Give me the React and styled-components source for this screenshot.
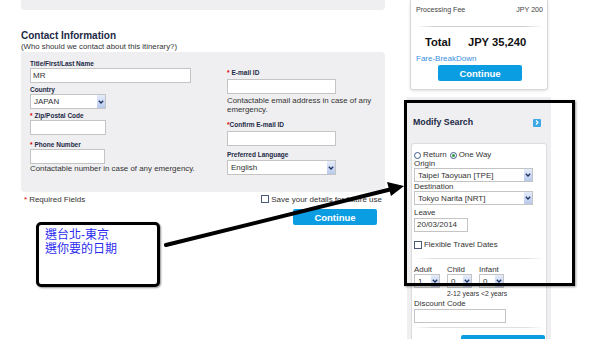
import React from 'react';
import styled, { createGlobalStyle } from 'styled-components';

const Global = createGlobalStyle`
  * { box-sizing: border-box; }
  body {
    margin: 0;
    background: #fff;
    font-family: "Liberation Sans", Arial, sans-serif;
    color: #333;
  }
`;

const Page = styled.div`
  position: relative;
  display: flex;
  align-items: flex-start;
  width: 600px;
  height: 339px;
  overflow: hidden;
`;

const Main = styled.main`
  width: 364px;
  margin-left: 21px;
  display: flex;
  flex-direction: column;
`;

const TopStub = styled.div`
  height: 10px;
  background: #efeff1;
  border-radius: 0 0 4px 4px;
`;

const Heading = styled.h2`
  margin: 19px 0 0;
  font-size: 10px;
  line-height: 13px;
  font-weight: bold;
  color: #1c2946;
`;

const Sub = styled.div`
  font-size: 7.8px;
  line-height: 10px;
  color: #333;
`;

const FormPanel = styled.section`
  height: 140px;
  background: #efeff1;
  border-radius: 0 4px 4px 4px;
  padding: 8px 0 0 9px;
  display: grid;
  grid-template-columns: 197px 1fr;
`;

const Col = styled.div`
  display: flex;
  flex-direction: column;
  align-items: flex-start;
`;

const Label = styled.div`
  margin-top: ${p => p.$mt || 0}px;
  font-size: 6.5px;
  line-height: 8px;
  font-weight: bold;
  color: #1c2946;
  white-space: nowrap;
`;

const Star = styled.span`
  color: #d40000;
  margin-right: ${p => (p.$tight ? 0 : 2)}px;
`;

const Input = styled.div`
  margin-top: ${p => p.$mt || 0}px;
  width: ${p => p.$w}px;
  height: ${p => p.$h || 15}px;
  background: #fff;
  border: 1px solid #c4c4c4;
  font-size: 8px;
  line-height: ${p => (p.$h || 15) - 2}px;
  padding-left: 2px;
  color: #333;
`;

const Select = styled.div`
  margin-top: ${p => p.$mt || 0}px;
  width: ${p => p.$w}px;
  height: ${p => p.$h || 15}px;
  display: flex;
  align-items: stretch;
  background: #fff;
  border: 1px solid #c4c4c4;
  font-size: 8px;
  color: #333;
`;

const SelectText = styled.span`
  flex: 1;
  padding-left: 3px;
  display: flex;
  align-items: center;
  white-space: nowrap;
  overflow: hidden;
`;

const Caret = styled.span`
  width: 8px;
  background: linear-gradient(#e6edfb, #b8c9ec);
  display: flex;
  align-items: center;
  justify-content: center;
`;

const Help = styled.div`
  margin-top: ${p => p.$mt || 0}px;
  font-size: 7.9px;
  line-height: 9px;
  color: #333;
`;

const BelowRow = styled.div`
  margin-top: 3px;
  height: 10px;
  display: flex;
  align-items: center;
  justify-content: space-between;
  font-size: 8px;
  line-height: 10px;
  color: #333;
  padding: 0 3px;
`;

const Check = styled.span`
  display: inline-block;
  width: 8px;
  height: 8px;
  border: 1px solid #4a5a78;
  background: #fff;
  margin-right: 2px;
  vertical-align: -1px;
`;

const Button = styled.div`
  margin: ${p => p.$mt || 0}px 0 0 ${p => (p.$ml === undefined ? 'auto' : `${p.$ml}px`)};
  margin-right: ${p => p.$mr || 0}px;
  width: 84px;
  height: 16px;
  flex-shrink: 0;
  background: #0b9de2;
  border-radius: 2px;
  color: #fff;
  font-size: 9.5px;
  font-weight: bold;
  display: flex;
  align-items: center;
  justify-content: center;
`;

const Side = styled.aside`
  width: 144px;
  margin-left: 22px;
  display: flex;
  flex-direction: column;
`;

const FareCard = styled.div`
  margin: 0 3px;
  border: 1px solid #d8d8d8;
  border-top: none;
  border-radius: 0 0 3px 3px;
  box-shadow: 0 1px 3px rgba(0, 0, 0, 0.12);
  padding: 5px 4px 8px 5px;
  display: flex;
  flex-direction: column;
`;

const FeeRow = styled.div`
  display: flex;
  justify-content: space-between;
  font-size: 7.1px;
  line-height: 10px;
  color: #444;
`;

const Sep = styled.div`
  margin-top: ${p => p.$mt}px;
  height: 1px;
  background: linear-gradient(90deg, transparent, #d0d0d0 15%, #d0d0d0 85%, transparent);
`;

const TotalRow = styled.div`
  margin-top: 8px;
  padding-left: 9px;
  display: flex;
  gap: 17px;
  font-size: 11.2px;
  line-height: 14px;
  font-weight: bold;
  color: #111;
`;

const Link = styled.div`
  margin-top: 5px;
  font-size: 8px;
  line-height: 10px;
  color: #3a8ee0;
`;

const ModifyPanel = styled.div`
  margin-top: 7px;
  background: #efeff1;
  padding: 20px 4px 0;
`;

const TitleRow = styled.div`
  display: flex;
  align-items: center;
  justify-content: space-between;
  padding: 0 6px 0 2px;
  font-size: 8.8px;
  line-height: 11px;
  font-weight: bold;
  color: #1c2946;
`;

const NextIcon = styled.span`
  width: 8px;
  height: 8px;
  background: #3ea7e6;
  border-radius: 1px;
  display: flex;
  align-items: center;
  justify-content: center;
`;

const SearchCard = styled.div`
  margin-top: 15px;
  background: #fff;
  border: 1px solid #dcdcdc;
  border-radius: 3px;
  padding: 6px 2px 12px;
  display: flex;
  flex-direction: column;
  align-items: flex-start;
  color: #333;
`;

const Line = styled.div`
  margin-top: ${p => p.$mt || 0}px;
  margin-left: ${p => p.$ml || 0}px;
  font-size: ${p => p.$fs || 7.9}px;
  line-height: ${p => p.$lh || 9}px;
  display: flex;
  align-items: center;
  white-space: nowrap;
`;

const Radio = styled.span`
  width: 7px;
  height: 7px;
  border-radius: 50%;
  border: 1px solid #3b5a8a;
  background: #fff;
  margin: 0 2px 0 ${p => (p.$on ? 3 : 0)}px;
  display: inline-flex;
  align-items: center;
  justify-content: center;
  &::after {
    content: '';
    width: 3px;
    height: 3px;
    border-radius: 50%;
    background: ${p => (p.$on ? '#2d9b3a' : 'transparent')};
  }
`;

const CardSep = styled.div`
  margin-top: ${p => p.$mt}px;
  align-self: stretch;
  height: 1px;
  background: linear-gradient(90deg, transparent, #dedede 15%, #dedede 85%, transparent);
`;

const Pax = styled.div`
  margin-top: 6px;
  display: grid;
  grid-template-columns: 33px 32px 26px;
`;

const Callout = styled.div`
  position: absolute;
  left: 36px;
  top: 222px;
  width: 124px;
  height: 65px;
  border: 3px solid #000;
  border-radius: 5px;
  background: #fff;
  box-shadow: 1px 1px 2px rgba(0, 0, 0, 0.45);
  padding: 3px 6px;
  color: #2b2bef;
  font-family: "Liberation Sans", "Noto Sans CJK TC", sans-serif;
  font-size: 12px;
  line-height: 14px;
`;

const Frame = styled.div`
  position: absolute;
  left: 404px;
  top: 100px;
  width: 171px;
  height: 186px;
  border: 3px solid #000;
  box-shadow: 1px 1px 2px rgba(0, 0, 0, 0.4);
  pointer-events: none;
`;

const ArrowLayer = styled.svg`
  position: absolute;
  left: 0;
  top: 0;
  pointer-events: none;
`;

const Chevron = () => (
  <svg width="6" height="4" viewBox="0 0 6 4">
    <path d="M0.8 0.8 L3 3 L5.2 0.8" fill="none" stroke="#1c2f5e" strokeWidth="1.3" />
  </svg>
);

const Dropdown = ({ w, h, mt, children }) => (
  <Select $w={w} $h={h} $mt={mt}>
    <SelectText>{children}</SelectText>
    <Caret><Chevron /></Caret>
  </Select>
);

const App = () => (
  <Page>
    <Global />
    <Main>
      <TopStub />
      <Heading>Contact Information</Heading>
      <Sub>(Who should we contact about this itinerary?)</Sub>
      <FormPanel>
        <Col>
          <Label>Title/First/Last Name</Label>
          <Input $w={161}>MR</Input>
          <Label $mt={3}>Country</Label>
          <Dropdown w={76}>JAPAN</Dropdown>
          <Label $mt={3}><Star>*</Star>Zip/Postal Code</Label>
          <Input $w={76} />
          <Label $mt={6}><Star>*</Star>Phone Number</Label>
          <Input $w={75} />
          <Help>Contactable number in case of any emergency.</Help>
        </Col>
        <Col>
          <Label $mt={9}><Star>*</Star>E-mail ID</Label>
          <Input $w={109} $mt={2} />
          <Help $mt={2}>Contactable email address in case of any<br />emergency.</Help>
          <Label $mt={7}><Star $tight>*</Star>Confirm E-mail ID</Label>
          <Input $w={109} $mt={2} />
          <Label $mt={5}>Preferred Language</Label>
          <Dropdown w={109} mt={1}>English</Dropdown>
        </Col>
      </FormPanel>
      <BelowRow>
        <span><Star>*</Star>Required Fields</span>
        <span><Check />Save your details for future use</span>
      </BelowRow>
      <Button $mt={4} $mr={8}>Continue</Button>
    </Main>

    <Side>
      <FareCard>
        <FeeRow>
          <span>Processing Fee</span>
          <span>JPY 200</span>
        </FeeRow>
        <Sep $mt={11} />
        <TotalRow>
          <span>Total</span>
          <span>JPY 35,240</span>
        </TotalRow>
        <Link>Fare-BreakDown</Link>
        <Button $mt={1} $ml={22}>Continue</Button>
      </FareCard>

      <ModifyPanel>
        <TitleRow>
          <span>Modify Search</span>
          <NextIcon>
            <svg width="4" height="5" viewBox="0 0 4 5">
              <path d="M1 0.5 L3 2.5 L1 4.5" fill="none" stroke="#fff" strokeWidth="1.2" />
            </svg>
          </NextIcon>
        </TitleRow>
        <SearchCard>
          <Line $lh={10}>
            <Radio />Return<Radio $on />One Way
          </Line>
          <Line $lh={8}>Origin</Line>
          <Dropdown w={119} h={14}>Taipei Taoyuan [TPE]</Dropdown>
          <Line>Destination</Line>
          <Dropdown w={119} h={14}>Tokyo Narita [NRT]</Dropdown>
          <Line $mt={3}>Leave</Line>
          <Input $w={54} $h={14} $mt={1}>20/03/2014</Input>
          <Line $mt={8} $lh={10}><Check />Flexible Travel Dates</Line>
          <CardSep $mt={8} />
          <Pax>
            <Line>Adult</Line>
            <Line>Child</Line>
            <Line>Infant</Line>
            <Dropdown w={26} h={14}>1</Dropdown>
            <Dropdown w={25} h={14}>0</Dropdown>
            <Dropdown w={25} h={14}>0</Dropdown>
          </Pax>
          <Line $mt={1} $ml={33} $fs={6.8}>2-12 years &lt;2 years</Line>
          <Line $mt={1}>Discount Code</Line>
          <Input $w={92} $h={14} $mt={1} />
          <CardSep $mt={4} />
          <Button $mt={7} $ml={47} aria-label="Search" />
        </SearchCard>
      </ModifyPanel>
    </Side>

    <Frame />
    <ArrowLayer width="600" height="339" viewBox="0 0 600 339">
      <line x1="166" y1="245" x2="392" y2="189" stroke="#000" strokeWidth="4" strokeLinecap="round" />
      <polygon points="404,186 387,182 391,196" fill="#000" />
    </ArrowLayer>
    <Callout>
      選台北-東京<br />選你要的日期
    </Callout>
  </Page>
);

export default App;
